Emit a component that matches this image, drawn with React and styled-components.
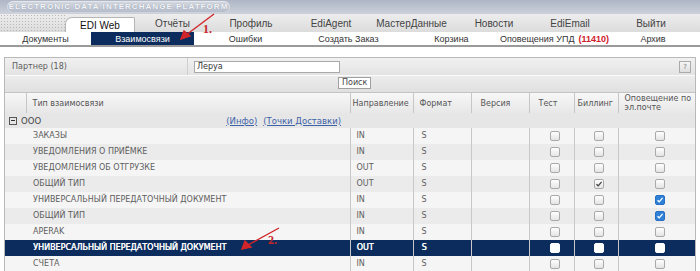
import React from 'react';
import styled, { createGlobalStyle } from 'styled-components';

const GlobalStyle = createGlobalStyle`
  html, body {
    margin: 0;
    padding: 0;
    background: #fff;
  }
  body {
    font-family: "DejaVu Sans", Verdana, sans-serif;
  }
`;

const topTabs = [
  { label: 'EDI Web', w: 70, active: true },
  { label: 'Отчёты', w: 75 },
  { label: 'Профиль', w: 82 },
  { label: 'EdiAgent', w: 78 },
  { label: 'МастерДанные', w: 83 },
  { label: 'Новости', w: 82 },
  { label: 'EdiEmail', w: 70 },
  { label: 'Выйти', w: 92 },
];

const subTabs = [
  { label: 'Документы', w: 91 },
  { label: 'Взаимосвязи', w: 103, active: true },
  { label: 'Ошибки', w: 103 },
  { label: 'Создать Заказ', w: 103 },
  { label: 'Корзина', w: 103 },
  { label: 'Оповещения УПД', w: 103, badge: '(11410)' },
  { label: 'Архив', w: 94 },
];

const rows = [
  { type: 'ЗАКАЗЫ', dir: 'IN' },
  { type: 'УВЕДОМЛЕНИЯ О ПРИЁМКЕ', dir: 'IN' },
  { type: 'УВЕДОМЛЕНИЯ ОБ ОТГРУЗКЕ', dir: 'OUT' },
  { type: 'ОБЩИЙ ТИП', dir: 'OUT', billing: true },
  { type: 'УНИВЕРСАЛЬНЫЙ ПЕРЕДАТОЧНЫЙ ДОКУМЕНТ', dir: 'IN', email: true },
  { type: 'ОБЩИЙ ТИП', dir: 'IN', email: true },
  { type: 'APERAK', dir: 'IN' },
  { type: 'УНИВЕРСАЛЬНЫЙ ПЕРЕДАТОЧНЫЙ ДОКУМЕНТ', dir: 'OUT', selected: true },
  { type: 'СЧЕТА', dir: 'IN' },
];

const Page = styled.div`
  position: relative;
  width: 700px;
  height: 271px;
  overflow: hidden;
`;

const Banner = styled.div`
  height: 14px;
  background: linear-gradient(#aeb6c6, #ccd1db);
  display: flex;
  align-items: center;
  padding-left: 7px;
`;

const Pill = styled.div`
  height: 12px;
  width: 223px;
  border-radius: 7px;
  background: linear-gradient(#d6dae2, #b3bac8);
  box-shadow: inset 0 0 0 1px rgba(255, 255, 255, 0.35);
  color: #f4f6fa;
  font-family: "Liberation Sans", Arial, sans-serif;
  font-weight: bold;
  font-size: 8px;
  letter-spacing: 1.05px;
  line-height: 12px;
  text-align: center;
  text-shadow: 0 0 1px rgba(90, 100, 120, 0.6);
  white-space: nowrap;
`;

const TopNav = styled.div`
  height: 18px;
  display: flex;
  background: linear-gradient(#ededed, #dcdcdc);
`;

const Dots = styled.div`
  width: 65px;
  background-image: radial-gradient(#b9b9b9 0.7px, transparent 0.9px);
  background-size: 3px 3px;
`;

const TopTab = styled.div`
  width: ${(p) => p.$w}px;
  box-sizing: border-box;
  margin-top: ${(p) => (p.$active ? '3px' : '0')};
  display: flex;
  align-items: center;
  justify-content: center;
  font-family: "Liberation Sans", Arial, sans-serif;
  font-size: 10px;
  color: ${(p) => (p.$active ? '#111' : '#444')};
  background: ${(p) => (p.$active ? '#fff' : 'transparent')};
  border: ${(p) => (p.$active ? '1px solid #b5b5b5' : 'none')};
  border-bottom: none;
  border-radius: ${(p) => (p.$active ? '7px 2px 0 0' : '0')};
`;

const SubNav = styled.div`
  height: 13px;
  display: flex;
  background: #fff;
  border-bottom: 2px solid #9a9a9a;
`;

const SubTab = styled.div`
  width: ${(p) => p.$w}px;
  display: flex;
  align-items: center;
  justify-content: center;
  gap: 4px;
  white-space: nowrap;
  font-family: "Liberation Sans", Arial, sans-serif;
  font-size: 9px;
  color: ${(p) => (p.$active ? '#fff' : '#333')};
  background: ${(p) => (p.$active ? '#0b2c5c' : 'transparent')};
`;

const Badge = styled.span`
  color: #d0202a;
  font-weight: bold;
`;

const Content = styled.div`
  padding: 10px 4px 0 4px;
`;

const Panel = styled.div`
  border: 1px solid #b9b9b9;
  border-bottom: none;
  font-size: 8px;
  color: #5c5c5c;
`;

const FilterRow = styled.div`
  height: 17px;
  display: flex;
  align-items: center;
  background: linear-gradient(#f1f1f1, #e3e3e3);
  border-bottom: 1px solid #fafafa;
`;

const FilterLabel = styled.div`
  width: 183px;
  height: 100%;
  box-sizing: border-box;
  padding-left: 7px;
  display: flex;
  align-items: center;
  border-right: 1px solid #cfcfcf;
`;

const Input = styled.div`
  margin-left: 6px;
  width: 142px;
  height: 10px;
  border: 1px solid #a9a9a9;
  background: #fff;
  padding-left: 2px;
  line-height: 10px;
  color: #333;
`;

const Help = styled.div`
  margin-left: auto;
  margin-right: 4px;
  width: 10px;
  height: 10px;
  border: 1px solid #aaa;
  background: linear-gradient(#f6f6f6, #dedede);
  font-size: 7px;
  line-height: 10px;
  text-align: center;
  color: #777;
`;

const SearchRow = styled.div`
  height: 16px;
  display: flex;
  align-items: flex-start;
  padding-left: 333px;
  background: linear-gradient(#ececec, #e0e0e0);
  border-bottom: 1px solid #c4c4c4;
`;

const Button = styled.div`
  margin-top: 1px;
  height: 10px;
  padding: 0 3px;
  border: 1px solid #a0a0a0;
  background: #fff;
  line-height: 10px;
  color: #444;
`;

const Table = styled.table`
  border-collapse: collapse;
  table-layout: fixed;
  width: 690px;
`;

const HeadRow = styled.tr`
  height: 20px;
`;

const Th = styled.th`
  padding: 0 0 0 ${(p) => p.$pl ?? 3}px;
  font-weight: normal;
  text-align: left;
  line-height: 9px;
  white-space: nowrap;
  color: #555;
  background: linear-gradient(#f7f7f7, #e7e7e7);
  border-right: 1px solid #c6c6c6;
  &:last-child {
    border-right: none;
  }
`;

const GroupRow = styled.tr`
  height: 15px;
  background: #e6e6e6;
`;

const GroupCell = styled.td`
  padding: 0 9px 0 4px;
`;

const GroupInner = styled.div`
  display: flex;
  align-items: center;
  gap: 2px;
  color: #444;
  font-size: 8.5px;
`;

const Minus = styled.span`
  display: inline-block;
  width: 6px;
  height: 6px;
  border: 1px solid #555;
  position: relative;
  margin-right: 2px;
  &::after {
    content: '';
    position: absolute;
    left: 1px;
    right: 1px;
    top: 2.5px;
    height: 1px;
    background: #333;
  }
`;

const Link = styled.span`
  margin-left: ${(p) => (p.$push ? 'auto' : '4px')};
  color: #3d63a8;
  text-decoration: underline;
`;

const Tr = styled.tr`
  height: 16px;
  background: ${(p) => (p.$selected ? '#0b2c5c' : p.$odd ? '#ebebeb' : '#f5f5f5')};
  color: ${(p) => (p.$selected ? '#fff' : '#5e5e5e')};
  text-shadow: ${(p) => (p.$selected ? '0.4px 0 0 #fff' : 'none')};
`;

const Td = styled.td`
  padding: 0 0 0 ${(p) => p.$indent ?? 6}px;
  border-left: ${(p) => (p.$noLine ? 'none' : '1px solid #c8c8c8')};
  text-align: ${(p) => (p.$center ? 'center' : 'left')};
  line-height: 10px;
  white-space: nowrap;
  overflow: hidden;
`;

const Box = styled.span`
  display: inline-block;
  vertical-align: middle;
  width: 8px;
  height: 8px;
  border-radius: 2px;
  border: 1px solid ${(p) => (p.$blue ? '#2a6fc2' : p.$white ? '#fff' : '#a9a9a9')};
  background: ${(p) =>
    p.$blue ? '#2f80d8' : p.$white ? '#fff' : 'linear-gradient(#ffffff, #e4e4e4)'};
  position: relative;
  svg {
    position: absolute;
    left: 0;
    top: 0;
  }
`;

const Overlay = styled.svg`
  position: absolute;
  left: 0;
  top: 0;
  pointer-events: none;
`;

const Check = ({ on, blue, white }) => (
  <Box $blue={on && blue} $white={white}>
    {on && (
      <svg width="8" height="8" viewBox="0 0 8 8">
        <path
          d="M1.5 4.2 L3.2 5.8 L6.6 1.8"
          fill="none"
          stroke={blue ? '#fff' : '#444'}
          strokeWidth="1.3"
        />
      </svg>
    )}
  </Box>
);

const App = () => (
  <Page>
    <GlobalStyle />
    <Banner>
      <Pill>ELECTRONIC DATA INTERCHANGE PLATFORM</Pill>
    </Banner>
    <TopNav>
      <Dots />
      {topTabs.map((t) => (
        <TopTab key={t.label} $w={t.w} $active={t.active}>
          {t.label}
        </TopTab>
      ))}
    </TopNav>
    <SubNav>
      {subTabs.map((t) => (
        <SubTab key={t.label} $w={t.w} $active={t.active}>
          {t.label}
          {t.badge && <Badge>{t.badge}</Badge>}
        </SubTab>
      ))}
    </SubNav>
    <Content>
      <Panel>
        <FilterRow>
          <FilterLabel>Партнер (18)</FilterLabel>
          <Input>Леруа</Input>
          <Help>?</Help>
        </FilterRow>
        <SearchRow>
          <Button>Поиск</Button>
        </SearchRow>
        <Table>
          <colgroup>
            <col style={{ width: 21 }} />
            <col style={{ width: 324 }} />
            <col style={{ width: 63 }} />
            <col style={{ width: 58 }} />
            <col style={{ width: 58 }} />
            <col style={{ width: 45 }} />
            <col style={{ width: 44 }} />
            <col style={{ width: 77 }} />
          </colgroup>
          <thead>
            <HeadRow>
              <Th />
              <Th $pl={6}>Тип взаимосвязи</Th>
              <Th $pl={2}>Направление</Th>
              <Th $pl={6}>Формат</Th>
              <Th $pl={9}>Версия</Th>
              <Th $pl={9}>Тест</Th>
              <Th $pl={3}>Биллинг</Th>
              <Th $pl={6}>
                Оповещение по
                <br />
                эл.почте
              </Th>
            </HeadRow>
          </thead>
          <tbody>
            <GroupRow>
              <GroupCell colSpan={2}>
                <GroupInner>
                  <Minus />
                  ООО
                  <Link $push>(Инфо)</Link>
                  <Link>(Точки Доставки)</Link>
                </GroupInner>
              </GroupCell>
              <GroupCell colSpan={6} />
            </GroupRow>
            {rows.map((r, i) => (
              <Tr key={i} $odd={i % 2 === 1} $selected={r.selected}>
                <Td colSpan={2} $noLine $indent={28}>
                  {r.type}
                </Td>
                <Td>{r.dir}</Td>
                <Td $indent={8}>S</Td>
                <Td />
                <Td $center>
                  <Check white={r.selected} />
                </Td>
                <Td $center>
                  <Check on={r.billing} white={r.selected} />
                </Td>
                <Td $center>
                  <Check on={r.email} blue white={r.selected} />
                </Td>
              </Tr>
            ))}
          </tbody>
        </Table>
      </Panel>
    </Content>
    <Overlay width="700" height="271" viewBox="0 0 700 271">
      <g stroke="#d0262b" strokeWidth="1.4" fill="#d0262b">
        <line x1="214" y1="14" x2="186" y2="35" />
        <polygon points="181,39 184,31 190,36" />
        <line x1="279" y1="228" x2="248" y2="245" />
        <polygon points="242,249 245,241 251,247" />
      </g>
      <text x="203" y="33" fill="#c8262b" fontFamily="Liberation Serif, serif" fontWeight="bold" fontSize="12">1.</text>
      <text x="268" y="244" fill="#c8262b" fontFamily="Liberation Serif, serif" fontWeight="bold" fontSize="12">2.</text>
    </Overlay>
  </Page>
);

export default App;
